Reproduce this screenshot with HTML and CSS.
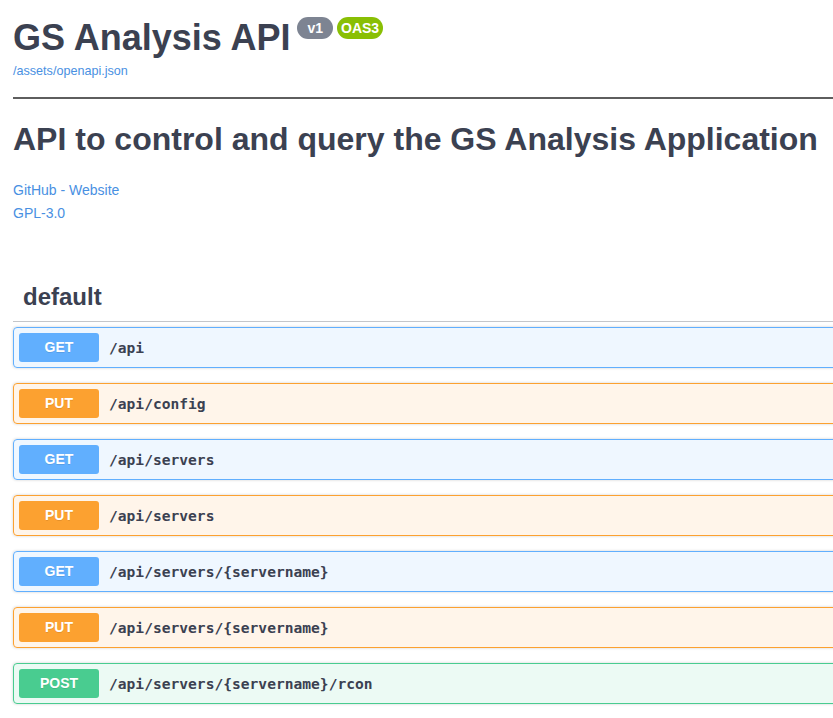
FILE: index.html
```html
<!DOCTYPE html>
<html lang="en">
<head>
<meta charset="utf-8">
<title>GS Analysis API</title>
<link rel="stylesheet" href="styles.css">
</head>
<body>
<div class="wrapper">
  <div class="info">
    <h1 class="title">GS Analysis API<span class="stamps"><span class="stamp stamp-version">v1</span><span class="stamp stamp-oas">OAS3</span></span></h1>
    <a class="base-url" href="#">/assets/openapi.json</a>
  </div>
  <hr class="divider">
  <div class="description">
    <h2 class="desc-title">API to control and query the GS Analysis Application</h2>
    <div class="info-links">
      <a class="info-link" href="#">GitHub - Website</a>
      <a class="info-link" href="#">GPL-3.0</a>
    </div>
  </div>
  <div class="tag-section">
    <h3 class="tag">default</h3>
    <div class="ops">
      <div class="opblock op-get"><span class="method">GET</span><span class="path">/api</span></div>
      <div class="opblock op-put"><span class="method">PUT</span><span class="path">/api/config</span></div>
      <div class="opblock op-get"><span class="method">GET</span><span class="path">/api/servers</span></div>
      <div class="opblock op-put"><span class="method">PUT</span><span class="path">/api/servers</span></div>
      <div class="opblock op-get"><span class="method">GET</span><span class="path">/api/servers/{servername}</span></div>
      <div class="opblock op-put"><span class="method">PUT</span><span class="path">/api/servers/{servername}</span></div>
      <div class="opblock op-post"><span class="method">POST</span><span class="path">/api/servers/{servername}/rcon</span></div>
    </div>
  </div>
</div>
</body>
</html>
```
FILE: styles.css
```css
html, body {
  margin: 0;
  padding: 0;
  background: #fff;
  overflow: hidden;
}
body {
  font-family: "Liberation Sans", Arial, sans-serif;
  color: #3b4151;
}
.wrapper {
  padding-left: 13px;
  margin-right: -30px;
}
.info {
  padding-top: 16px;
}
.title {
  margin: 0;
  font-size: 36px;
  line-height: 44px;
  font-weight: 700;
  color: #3b4151;
  white-space: nowrap;
}
.stamps {
  display: inline-flex;
  gap: 4px;
  margin-left: 7px;
  vertical-align: top;
  position: relative;
  top: 1px;
}
.stamp {
  display: inline-block;
  font-size: 14px;
  line-height: 22px;
  height: 22px;
  padding: 0 4px;
  border-radius: 57px;
  color: #fff;
  font-weight: 700;
}
.stamp-version {
  background: #7d8492;
  padding: 0 10px;
}
.stamp-oas {
  background: #89bf04;
}
.base-url {
  display: block;
  margin-top: 3px;
  font-size: 12.6px;
  line-height: 16px;
  color: #4990e2;
  text-decoration: none;
}
.divider {
  margin: 18px 0 0;
  border: 0;
  border-top: 2px solid #5e5e5e;
  height: 0;
}
.description {
  padding-top: 20px;
}
.desc-title {
  margin: 0;
  font-size: 32px;
  line-height: 40px;
  font-weight: 700;
  white-space: nowrap;
}
.info-links {
  display: flex;
  flex-direction: column;
  margin-top: 20px;
}
.info-link {
  font-size: 14px;
  line-height: 23px;
  color: #4990e2;
  text-decoration: none;
}
.tag-section {
  margin-top: 47px;
}
.tag {
  margin: 0;
  padding: 10px 20px 10px 10px;
  font-size: 24px;
  line-height: 29px;
  font-weight: 700;
  border-bottom: 1px solid rgba(59, 65, 81, 0.3);
}
.ops {
  padding-top: 5px;
}
.opblock {
  display: flex;
  align-items: center;
  padding: 5px;
  margin-bottom: 15px;
  border: 1px solid;
  border-radius: 4px;
  box-shadow: 0 0 3px rgba(0, 0, 0, 0.19);
}
.method {
  min-width: 80px;
  padding: 6px 0;
  font-size: 14px;
  line-height: 17px;
  font-weight: 700;
  text-align: center;
  color: #fff;
  border-radius: 3px;
  text-shadow: 0 1px 0 rgba(0, 0, 0, 0.1);
}
.path {
  padding: 0 10px;
  font-family: "DejaVu Sans Mono", monospace;
  font-size: 14.6px;
  font-weight: 700;
  color: #3b4151;
}
.op-get {
  background: rgba(97, 175, 254, 0.1);
  border-color: #61affe;
}
.op-get .method {
  background: #61affe;
}
.op-put {
  background: rgba(252, 161, 48, 0.1);
  border-color: #fca130;
}
.op-put .method {
  background: #fca130;
}
.op-post {
  background: rgba(73, 204, 144, 0.1);
  border-color: #49cc90;
}
.op-post .method {
  background: #49cc90;
}
```
